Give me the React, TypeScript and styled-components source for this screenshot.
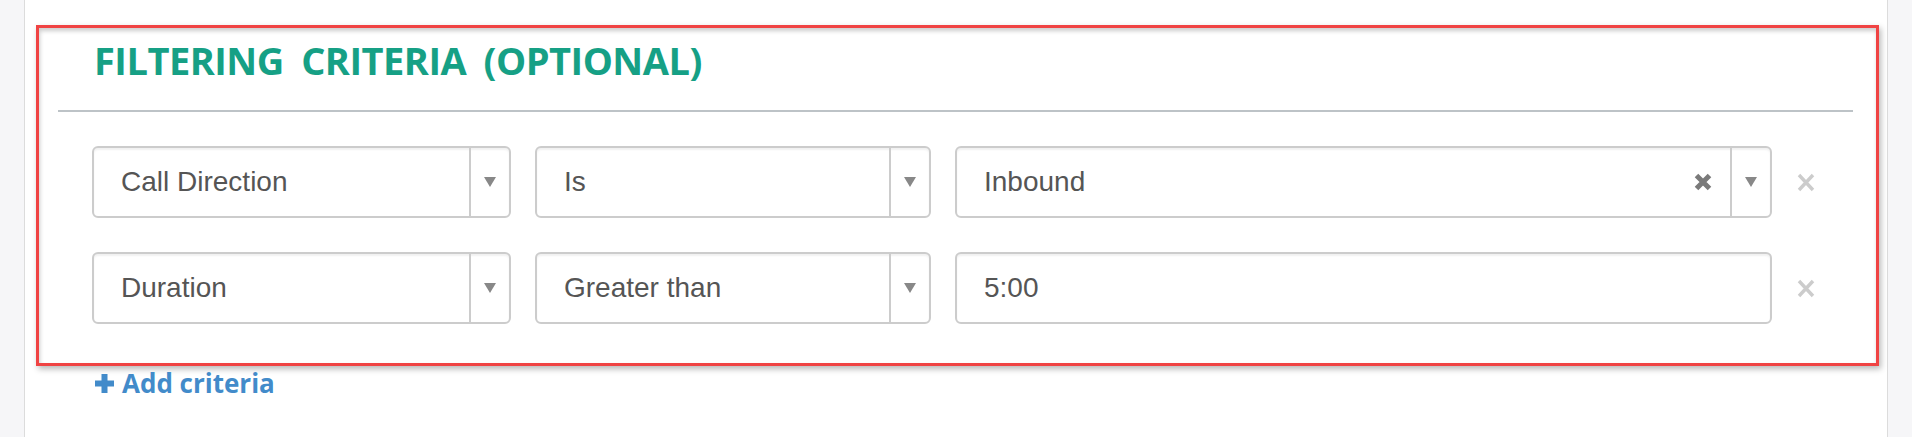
import React from 'react';
import styled, { createGlobalStyle } from 'styled-components';

const GlobalStyle = createGlobalStyle`
  html, body {
    margin: 0;
    padding: 0;
    background: #ffffff;
  }

  #root {
    height: 437px;
  }
`;

type Criterion = {
  field: string;
  operator: string;
  value: string;
  valueIsSelect: boolean;
};

const CRITERIA: Criterion[] = [
  { field: 'Call Direction', operator: 'Is', value: 'Inbound', valueIsSelect: true },
  { field: 'Duration', operator: 'Greater than', value: '5:00', valueIsSelect: false },
];

function ClearIcon() {
  return (
    <svg width="18" height="18" viewBox="0 0 18 18">
      <path d="M2.5 2.5 L15.5 15.5 M15.5 2.5 L2.5 15.5" stroke="#7a7a7a" strokeWidth="5" />
    </svg>
  );
}

function RemoveIcon() {
  return (
    <svg width="18" height="19" viewBox="0 0 18 19">
      <path d="M2 2 L16 17 M16 2 L2 17" stroke="#cccccc" strokeWidth="3.4" />
    </svg>
  );
}

function PlusIcon() {
  return (
    <svg width="21" height="21" viewBox="0 0 21 21">
      <path d="M10.5 1 V20 M1 10.5 H20" stroke="#428bca" strokeWidth="6" />
    </svg>
  );
}

export default function App() {
  const rowsMarkup = CRITERIA.map((item) => (
    <Row key={item.field}>
      <Box>
        <Value>{item.field}</Value>
        <ArrowCell>
          <Arrow />
        </ArrowCell>
      </Box>
      <Box>
        <Value>{item.operator}</Value>
        <ArrowCell>
          <Arrow />
        </ArrowCell>
      </Box>
      <Box>
        <Value>{item.value}</Value>
        {item.valueIsSelect && (
          <>
            <ClearButton>
              <ClearIcon />
            </ClearButton>
            <ArrowCell>
              <Arrow />
            </ArrowCell>
          </>
        )}
      </Box>
      <RemoveButton>
        <RemoveIcon />
      </RemoveButton>
    </Row>
  ));

  return (
    <>
      <GlobalStyle />
      <Page>
        <Gutter />
        <Content>
          <Card>
            <Title>Filtering criteria (optional)</Title>
            <Divider />
            <Rows>{rowsMarkup}</Rows>
          </Card>
          <AddLink>
            <PlusIcon />
            <span>Add criteria</span>
          </AddLink>
        </Content>
        <Gutter />
      </Page>
    </>
  );
}

const Page = styled.div`
  display: flex;
  height: 437px;
  overflow: hidden;
`;

const Gutter = styled.div`
  width: 24px;
  flex-shrink: 0;
  background: #f6f6f8;
`;

const Content = styled.div`
  flex: 1;
  background: #ffffff;
  border-left: 1px solid #dcdcdc;
  border-right: 1px solid #dcdcdc;
  padding: 25px 8px 0 11px;
`;

const Card = styled.div`
  border: 3px solid #f04343;
  padding: 10px 23px 39px 19px;
  box-shadow: 2px 3px 6px rgba(0, 0, 0, 0.28), inset 1px 3px 4px rgba(0, 0, 0, 0.2);
`;

const Title = styled.h2`
  margin: 0;
  padding-left: 36px;
  font-family: 'Open Sans', sans-serif;
  font-weight: 700;
  font-size: 38px;
  line-height: 44px;
  letter-spacing: -0.5px;
  word-spacing: 8px;
  text-transform: uppercase;
  color: #16a085;
`;

const Divider = styled.div`
  height: 2px;
  margin-top: 28px;
  background: #bdc3c7;
`;

const Rows = styled.div`
  display: flex;
  flex-direction: column;
  gap: 34px;
  margin-top: 34px;
  padding-left: 34px;
`;

const Row = styled.div`
  display: grid;
  grid-template-columns: 419px 396px 817px auto;
  column-gap: 24px;
  align-items: center;
`;

const Box = styled.div`
  display: flex;
  align-items: stretch;
  height: 72px;
  box-sizing: border-box;
  border: 2px solid #cccccc;
  border-radius: 6px;
  background: #ffffff;
  box-shadow: inset 0 2px 2px rgba(0, 0, 0, 0.06);
`;

const Value = styled.div`
  flex: 1;
  display: flex;
  align-items: center;
  padding-left: 27px;
  font-family: 'Liberation Sans', Arial, sans-serif;
  font-size: 28px;
  color: #555555;
`;

const ClearButton = styled.div`
  display: flex;
  align-items: center;
  margin-right: 18px;
`;

const ArrowCell = styled.div`
  width: 38px;
  display: flex;
  align-items: center;
  justify-content: center;
  border-left: 2px solid #cccccc;
`;

const Arrow = styled.span`
  width: 0;
  height: 0;
  border-left: 6px solid transparent;
  border-right: 6px solid transparent;
  border-top: 10px solid #888888;
`;

const RemoveButton = styled.div`
  display: flex;
  align-items: center;
  margin-left: 1px;
`;

const AddLink = styled.div`
  display: flex;
  align-items: center;
  gap: 7px;
  margin-top: 2px;
  padding-left: 58px;
  font-family: 'Open Sans', sans-serif;
  font-weight: 700;
  font-size: 26px;
  line-height: 30px;
  color: #428bca;
`;
